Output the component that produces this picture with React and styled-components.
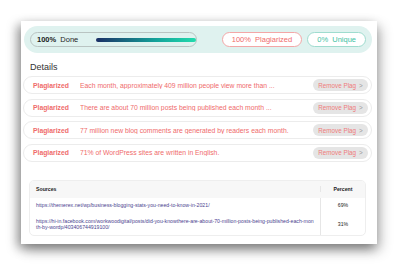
import React from "react";
import styled, { createGlobalStyle } from "styled-components";

const Global = createGlobalStyle`
  body {
    margin: 0;
    background: #ffffff;
    font-family: "Liberation Sans", Arial, sans-serif;
  }
`;

const rows = [
  "Each month, approximately 409 million people view more than ...",
  "There are about 70 million posts being published each month ...",
  "77 million new blog comments are generated by readers each month.",
  "71% of WordPress sites are written in English.",
];

const sources = [
  {
    url: "https://themerex.net/wp/business-blogging-stats-you-need-to-know-in-2021/",
    pct: "69%",
  },
  {
    url: "https://hi-in.facebook.com/workwoodigital/posts/did-you-knowthere-are-about-70-million-posts-being-published-each-month-by-wordp/403406744919100/",
    pct: "31%",
  },
];

function App() {
  return (
    <Page>
      <Global />
      <Card>
        <StatusBar>
          <DonePill>
            <b>100%</b>&nbsp;&nbsp;Done
            <Progress />
          </DonePill>
          <Spacer />
          <StatPill tone="red">100%&nbsp;&nbsp;Plagiarized</StatPill>
          <StatPill tone="teal">0%&nbsp;&nbsp;Unique</StatPill>
        </StatusBar>
        <Heading>Details</Heading>
        <List>
          {rows.map((t) => (
            <Row key={t}>
              <Tag>Plagiarized</Tag>
              <RowText>{t}</RowText>
              <RemoveBtn>
                Remove Plag <Chev>&gt;</Chev>
              </RemoveBtn>
            </Row>
          ))}
        </List>
        <Table>
          <HeadRow>
            <Cell bold>Sources</Cell>
            <PctCell bold>Percent</PctCell>
          </HeadRow>
          {sources.map((s) => (
            <BodyRow key={s.url}>
              <Cell link>{s.url}</Cell>
              <PctCell>{s.pct}</PctCell>
            </BodyRow>
          ))}
        </Table>
      </Card>
    </Page>
  );
}

const Page = styled.div`
  padding: 21px;
  width: 398px;
  height: 265px;
  box-sizing: border-box;
`;

const Card = styled.div`
  width: 356px;
  height: 223px;
  background: #fff;
  box-shadow: -4px 4px 10px rgba(0, 0, 0, 0.35), 3px 6px 12px rgba(0, 0, 0, 0.3);
  padding: 5px 5px 0 3px;
  box-sizing: border-box;
  display: flex;
  flex-direction: column;
`;

const StatusBar = styled.div`
  height: 27px;
  border-radius: 14px;
  background: #dff2ef;
  display: flex;
  align-items: center;
  padding: 0 6px;
  gap: 5px;
`;

const DonePill = styled.div`
  width: 167px;
  height: 15px;
  box-sizing: border-box;
  border: 1px solid #b9c4c2;
  border-radius: 8px;
  display: flex;
  align-items: center;
  padding-left: 6px;
  font-size: 7.5px;
  color: #222;
  b {
    font-weight: 700;
  }
`;

const Progress = styled.div`
  margin-left: 18px;
  width: 100px;
  height: 4px;
  border-radius: 2px;
  background: linear-gradient(90deg, #1b2f66, #14a39a 60%, #22dbad);
`;

const Spacer = styled.div`
  flex: 1;
`;

const StatPill = styled.div`
  height: 15px;
  box-sizing: border-box;
  padding: 0 9px;
  border-radius: 8px;
  background: #fff;
  display: flex;
  align-items: center;
  font-size: 7.5px;
  border: 1px solid ${(p) => (p.tone === "red" ? "#f3a7a7" : "#9fdccf")};
  color: ${(p) => (p.tone === "red" ? "#ef6b6b" : "#3fc2a4")};
`;

const Heading = styled.div`
  font-size: 9px;
  color: #333;
  margin: 9px 0 0 6px;
  line-height: 11px;
`;

const List = styled.div`
  display: flex;
  flex-direction: column;
  gap: 4.5px;
  margin: 3px 0 0 -1px;
`;

const Row = styled.div`
  height: 18px;
  box-sizing: border-box;
  border: 1px solid #ececec;
  border-radius: 9px;
  display: flex;
  align-items: center;
  padding: 0 3px 0 9px;
  font-size: 6.8px;
  color: #ef6b6b;
`;

const Tag = styled.span`
  font-weight: 700;
  width: 47px;
  flex-shrink: 0;
`;

const RowText = styled.span`
  flex: 1;
  white-space: nowrap;
  overflow: hidden;
`;

const RemoveBtn = styled.div`
  width: 55px;
  height: 12px;
  border-radius: 6px;
  background: #e5e5e5;
  color: #ef7b7b;
  font-size: 6.3px;
  display: flex;
  align-items: center;
  justify-content: center;
  gap: 3px;
`;

const Chev = styled.span`
  color: #999;
`;

const Table = styled.div`
  margin: 18px 6px 0 5px;
  border: 1px solid #eeeeee;
  border-radius: 5px;
  overflow: hidden;
  font-size: 5.2px;
`;

const HeadRow = styled.div`
  display: flex;
  height: 17px;
  background: #f7f7f7;
  align-items: center;
`;

const BodyRow = styled.div`
  display: flex;
  align-items: stretch;
`;

const Cell = styled.div`
  flex: 1;
  display: flex;
  align-items: center;
  padding: 4.5px 6px;
  line-height: 6.5px;
  word-break: break-all;
  font-weight: ${(p) => (p.bold ? 700 : 400)};
  color: ${(p) => (p.link ? "#4b3f8f" : "#222")};
`;

const PctCell = styled.div`
  width: 44px;
  flex-shrink: 0;
  border-left: 1px solid #e6e6e6;
  display: flex;
  align-items: center;
  justify-content: center;
  font-weight: ${(p) => (p.bold ? 700 : 400)};
  color: #222;
`;

export default App;
